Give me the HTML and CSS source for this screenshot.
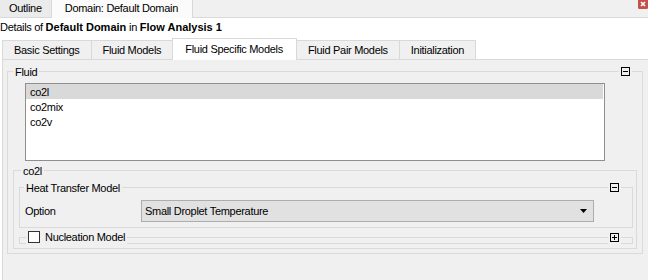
FILE: index.html
```html
<!DOCTYPE html>
<html lang="en">
<head>
    <meta charset="UTF-8">
    <title>Default Domain</title>
    <link rel="stylesheet" href="styles.css">
</head>
<body>

<div class="topbar">
    <div class="top-tab">Outline</div>
    <div class="top-tab active">Domain: Default Domain</div>
    <span class="close">
        <svg width="10" height="10" viewBox="0 0 10 10">
            <rect x="0" y="0" width="10" height="10" rx="1.5" fill="#c4504c"/>
            <path d="M3 3 L7 7 M7 3 L3 7" stroke="#fff" stroke-width="1.6"/>
        </svg>
    </span>
</div>

<div class="details">Details of <b>Default Domain</b> in <b>Flow Analysis 1</b></div>

<div class="tabs">
    <div class="tab">Basic Settings</div>
    <div class="tab">Fluid Models</div>
    <div class="tab active">Fluid Specific Models</div>
    <div class="tab">Fluid Pair Models</div>
    <div class="tab">Initialization</div>
</div>

<div class="panel">
    <div class="group fluid">
        <span class="group-title">Fluid</span>
        <span class="toggle"></span>

        <div class="list">
            <div class="item selected">co2l</div>
            <div class="item">co2mix</div>
            <div class="item">co2v</div>
        </div>

        <div class="group co2l">
            <span class="group-title">co2l</span>

            <div class="group heat">
                <span class="group-title">Heat Transfer Model</span>
                <span class="toggle"></span>

                <div class="option-row">
                    <span>Option</span>
                    <div class="combo">
                        <span>Small Droplet Temperature</span>
                        <svg width="7" height="4" viewBox="0 0 7 4">
                            <polygon points="0,0 7,0 3.5,4" fill="#000"/>
                        </svg>
                    </div>
                </div>
            </div>

            <div class="group nucleation">
                <label class="group-title check-title">
                    <span class="checkbox"></span>Nucleation Model
                </label>
                <span class="toggle plus"></span>
            </div>
        </div>
    </div>
</div>

</body>
</html>
```

FILE: styles.css
```css
body {
    margin: 0;
    background: #fff;
    font-family: "Liberation Sans", Arial, sans-serif;
    font-size: 11px;
    letter-spacing: -0.3px;
    color: #000;
    overflow: hidden;
}

b {
    letter-spacing: 0;
}

/* window tabs */
.topbar {
    display: flex;
    align-items: flex-start;
    height: 17px;
    background: #f0f0f0;
    border-bottom: 1px solid #d9d9d9;
}

.top-tab {
    height: 17px;
    line-height: 17px;
    padding: 0 9px;
    background: #ebebeb;
    border-right: 1px solid #d9d9d9;
}

.top-tab.active {
    height: 18px;
    margin-bottom: -1px;
    padding: 0 14px 0 13px;
    background: #fbfbfb;
}

.close {
    margin-left: auto;
    margin-top: -1px;
    height: 10px;
}

.close svg {
    display: block;
}

.details {
    padding-top: 2px;
    line-height: 14px;
}

/* page tabs */
.tabs {
    display: flex;
    align-items: flex-end;
    padding: 4px 0 0 2px;
}

.tab {
    line-height: 18px;
    padding: 0 11px;
    margin-right: -1px;
    background: #f0f0f0;
    border: 1px solid #d9d9d9;
    border-bottom: none;
}

.tab.active {
    position: relative;
    z-index: 1;
    padding: 1px 13px 2px 12px;
    margin-bottom: -1px;
    background: #fff;
}

.panel {
    margin-left: 2px;
    padding-bottom: 40px;
    background: #f0f0f0;
    border-top: 1px solid #d9d9d9;
    border-left: 1px solid #d9d9d9;
}

/* group boxes */
.group {
    position: relative;
    border: 1px solid #dadada;
}

.group-title {
    position: absolute;
    top: -7px;
    left: 5px;
    padding: 0 2px;
    line-height: 14px;
    background: #f0f0f0;
}

.toggle {
    position: absolute;
    top: -5px;
    right: 12px;
    width: 9px;
    height: 9px;
    box-sizing: border-box;
    border: 1px solid #000;
    background: #f0f0f0;
    box-shadow: 0 0 0 2px #f0f0f0;
}

.toggle::before {
    content: "";
    position: absolute;
    left: 1px;
    top: 3px;
    width: 5px;
    height: 1px;
    background: #000;
}

.toggle.plus::after {
    content: "";
    position: absolute;
    left: 3px;
    top: 1px;
    width: 1px;
    height: 5px;
    background: #000;
}

.fluid {
    margin: 11px 5px 0 4px;
    padding: 11px 5px 4px 5px;
}

.list {
    height: 78px;
    box-sizing: border-box;
    margin: 0 32px 0 12px;
    padding-right: 1px;
    background: #fff;
    border: 1px solid #8f8f8f;
}

.item {
    height: 15px;
    line-height: 17px;
    padding-left: 4px;
}

.item.selected {
    background: #d9d9d9;
}

.co2l {
    margin-top: 9px;
    padding: 16px 3px 4px 5px;
}

.co2l > .group-title {
    left: 7px;
}

.heat {
    padding: 12px 38px 5px 5px;
}

.heat > .group-title {
    left: 4px;
}

.heat .toggle,
.nucleation .toggle {
    right: 13px;
}

.option-row {
    display: grid;
    grid-template-columns: 116px 1fr;
    align-items: center;
}

.combo {
    display: flex;
    justify-content: space-between;
    align-items: center;
    height: 22px;
    box-sizing: border-box;
    padding: 0 6px 0 3px;
    background: #e1e1e1;
    border: 1px solid #adadad;
}

.combo svg {
    display: block;
}

.nucleation {
    margin-top: 9px;
    height: 5px;
}

.check-title {
    top: -8px;
    left: 6px;
    display: flex;
    align-items: center;
    gap: 5px;
}

.checkbox {
    width: 12px;
    height: 12px;
    box-sizing: border-box;
    background: #fff;
    border: 1px solid #333;
}
```
